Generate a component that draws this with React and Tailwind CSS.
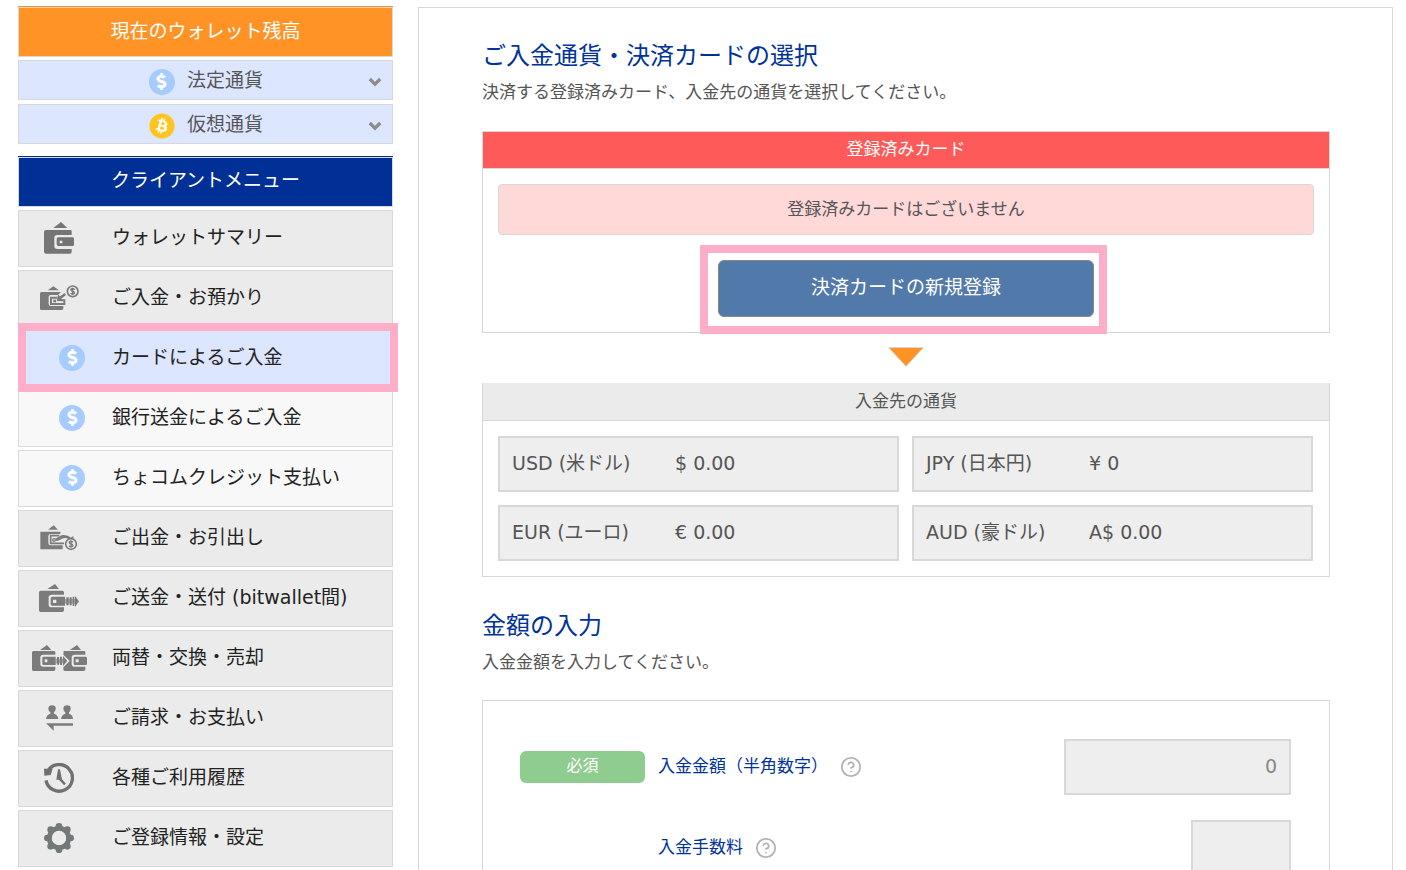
import React from "react";
import { FaBitcoin, FaDollarSign } from "react-icons/fa";
import { CircleHelp } from "lucide-react";

function WalletIcon() {
  return (
    <svg width="30" height="32" viewBox="132 66 90 96" fill="#757575" aria-hidden="true">
      <path d="M160 84 L183 66 L202 84 Z" />
      <path d="M138 90 H212 Q215 90 215 94 V105 H172 Q163 105 163 113 V139 Q163 147 172 147 H215 V156 Q215 161 210 161 H138 Q132 161 132 155 V96 Q132 90 138 90 Z" />
      <path fillRule="evenodd" d="M175 112 H218 Q222 112 222 116 V134 Q222 138 218 138 H175 Q170 138 170 133 V117 Q170 112 175 112 Z M179 122 V130 H187 V122 Z" />
    </svg>
  );
}

function DepositIcon() {
  return (
    <svg width="39" height="26" viewBox="120 257 117 78" fill="#7b7b7b" aria-hidden="true">
      <path d="M143 273 L160 261 L177 273 Z" />
      <path d="M124 278 H183 L174 287 H152 Q146 287 146 293 V314 Q146 320 152 320 H190 V327 Q190 332 185 332 H124 Q120 332 120 328 V283 Q120 278 124 278 Z" />
      <path d="M172 295 H153 V314 H193 V303 H181" fill="none" stroke="#7b7b7b" strokeWidth="6" />
      <path d="M160 301 H168 V309 H160 Z" />
      <path d="M170 306 L174 286 L180 291 L194 281 L198 287 L184 298 L190 304 Z" />
      <circle cx="218" cy="276" r="16" fill="none" stroke="#7b7b7b" strokeWidth="5" />
      <path d="M224 271 Q218 265 213 270 Q212 275 218 276 Q225 278 223 282 Q218 287 212 281 M218 265 V287" fill="none" stroke="#7b7b7b" strokeWidth="4" />
    </svg>
  );
}

function WithdrawIcon() {
  return (
    <svg width="38" height="26" viewBox="122 437 114 78" fill="#7b7b7b" aria-hidden="true">
      <path d="M146 451 L163 438 L176 451 Z" />
      <path d="M123 457 H183 V464 H154 Q147 464 147 471 V491 Q147 498 154 498 H190 V510 H123 Z" />
      <path d="M180 469 H154 V492 H194" fill="none" stroke="#7b7b7b" strokeWidth="5" />
      <circle cx="164" cy="482" r="4" fill="none" stroke="#7b7b7b" strokeWidth="4" />
      <path d="M168 478 L188 467 Q206 466 214 475 L222 470 V488 L202 485 L208 480 Q200 474 192 477 L172 486 Z" />
      <circle cx="215" cy="494" r="16" fill="#ebebeb" stroke="#7b7b7b" strokeWidth="5" />
      <path d="M221 489 Q215 483 210 488 Q209 493 215 494 Q222 496 220 500 Q215 505 209 499 M215 483 V505" fill="none" stroke="#7b7b7b" strokeWidth="4" />
    </svg>
  );
}

function TransferIcon() {
  return (
    <svg width="40" height="28" viewBox="117 72 120 84" fill="#7b7b7b" aria-hidden="true">
      <path d="M142 87 L165 72 L177 87 Z" />
      <path d="M122 92 H187 Q192 92 192 97 V104 H156 Q146 104 146 112 V134 Q146 142 156 142 H192 V151 Q192 156 187 156 H122 Q117 156 117 151 V97 Q117 92 122 92 Z" />
      <path fillRule="evenodd" d="M157 110 H195 V137 H157 Q152 137 152 132 V115 Q152 110 157 110 Z M159 119 V129 H169 V119 Z" />
      <path d="M199 112 H206 V136 H199 Z M209 112 H215 V136 H209 Z M218 110 H223 V138 H218 Z M225 108 L237 124 L225 141 Z" />
      <path opacity="0.6" d="M195 117 H226 V131 H195 Z" />
    </svg>
  );
}

function ExchangeIcon() {
  return (
    <svg width="55" height="26" viewBox="96 255 165 78" fill="#7b7b7b" aria-hidden="true">
      <path d="M120 270 L141 255 L154 270 Z M209 270 L231 255 L243 270 Z" />
      <path d="M100 273 H162 Q166 273 166 277 V284 H130 Q121 284 121 292 V312 Q121 320 130 320 H166 V328 Q166 333 161 333 H100 Q96 333 96 328 V278 Q96 273 100 273 Z" />
      <path fillRule="evenodd" d="M131 290 H167 V315 H131 Q127 315 127 311 V294 Q127 290 131 290 Z M134 298 V307 H142 V298 Z" />
      <path d="M171 291 H177 V314 H171 Z M180 290 H186 V315 H180 Z M189 288 L202 303 L189 318 Z" />
      <path opacity="0.6" d="M167 296 H192 V310 H167 Z" />
      <path d="M191 273 H252 Q256 273 256 277 V284 H224 Q215 284 215 292 V312 Q215 320 224 320 H256 V328 Q256 333 251 333 H194 Q190 333 190 328 V322 L209 303 L190 284 Z" />
      <path fillRule="evenodd" d="M225 290 H257 Q261 290 261 294 V311 Q261 315 257 315 H225 Q221 315 221 311 V294 Q221 290 225 290 Z M227 298 V307 H236 V298 Z" />
    </svg>
  );
}

function PeopleIcon() {
  return (
    <svg width="27" height="26" viewBox="138 16 81 78" fill="#7b7b7b" aria-hidden="true">
      <path d="M156 17 C171 17 169 33 162 38 V42 Q174 46 175 58 H138 Q139 46 151 42 V38 C143 33 142 17 156 17 Z" />
      <path d="M201 17 C216 17 214 33 207 38 V42 Q219 46 219 58 H183 Q184 46 196 42 V38 C188 33 187 17 201 17 Z" />
      <path d="M138 71 H219 V78 H161 V93 Z" />
    </svg>
  );
}

function HistoryIcon() {
  return (
    <svg width="30" height="30" viewBox="132 188 90 90" fill="none" stroke="#707070" aria-hidden="true">
      <path d="M143 212 A40 40 0 1 1 138 240" strokeWidth="10" />
      <path d="M132 205 L158 205 L152 224 L133 226 Z" fill="#707070" stroke="none" />
      <path d="M178 234 L195 252" strokeWidth="7" />
      <path d="M174 207 L169 238 L186 238 L180 207 Z" fill="#707070" stroke="none" />
    </svg>
  );
}

function GearIcon() {
  return (
    <svg width="30" height="30" viewBox="-45 -45 90 90" fill="#737878" aria-hidden="true">
      <circle r="29" fill="none" stroke="#737878" strokeWidth="15" />
      <circle cx="0" cy="-35" r="10" />
      <circle cx="25" cy="-25" r="10" />
      <circle cx="35" cy="0" r="10" />
      <circle cx="25" cy="25" r="10" />
      <circle cx="0" cy="35" r="10" />
      <circle cx="-25" cy="25" r="10" />
      <circle cx="-35" cy="0" r="10" />
      <circle cx="-25" cy="-25" r="10" />
      <circle r="21" fill="#ebebeb" />
    </svg>
  );
}

function DollarCoin() {
  return (
    <span className="flex size-[26px] shrink-0 items-center justify-center rounded-full bg-[#a5cbff] text-white">
      <FaDollarSign size={17} stroke="currentColor" strokeWidth={16} aria-hidden="true" />
    </span>
  );
}

function BitcoinCoin() {
  return (
    <span className="flex size-[26px] shrink-0 items-center justify-center rounded-full bg-[radial-gradient(circle,white_60%,transparent_61%)] text-[#ffc51f]">
      <FaBitcoin size={26} aria-hidden="true" />
    </span>
  );
}

const menu = [
  { label: "ウォレットサマリー", Icon: WalletIcon },
  { label: "ご入金・お預かり", Icon: DepositIcon },
  { label: "カードによるご入金", sub: true, active: true },
  { label: "銀行送金によるご入金", sub: true },
  { label: "ちょコムクレジット支払い", sub: true },
  { label: "ご出金・お引出し", Icon: WithdrawIcon },
  { label: "ご送金・送付 (bitwallet間)", Icon: TransferIcon },
  { label: "両替・交換・売却", Icon: ExchangeIcon },
  { label: "ご請求・お支払い", Icon: PeopleIcon },
  { label: "各種ご利用履歴", Icon: HistoryIcon },
  { label: "ご登録情報・設定", Icon: GearIcon },
];

const currencies = [
  ["USD (米ドル)", "$ 0.00"],
  ["JPY (日本円)", "¥ 0"],
  ["EUR (ユーロ)", "€ 0.00"],
  ["AUD (豪ドル)", "A$ 0.00"],
];

function MenuItem({ label, Icon, sub, active }) {
  const tone = active ? "bg-[#dce6ff]" : sub ? "bg-[#f8f8f8]" : "bg-[#ebebeb]";
  return (
    <li className="relative">
      <a
        href="#"
        aria-current={active ? "page" : undefined}
        className={`flex h-[57px] items-center gap-[13px] border border-[#d8d8d8] text-[19px] leading-6 text-[#222] ${tone}`}
      >
        <span className={`flex w-20 shrink-0 justify-center pb-0.5 ${sub ? "pl-[26px]" : ""}`}>
          {sub ? <DollarCoin /> : <Icon />}
        </span>
        <span className="pb-1">{label}</span>
      </a>
      {active && (
        <span className="pointer-events-none absolute -top-[7px] -right-[5px] -bottom-[5px] left-0 z-10 border-8 border-[#ffaec9]" />
      )}
    </li>
  );
}

function WalletToggle({ label, children }) {
  return (
    <button
      type="button"
      className="relative flex h-10 w-full items-center justify-center gap-3 border border-[#d8d8d8] bg-[#dce6ff] pl-px text-[19px] leading-6 text-[#555]"
    >
      <span className="pt-[3px]">{children}</span>
      <span>{label}</span>
      <svg width="14" height="10" viewBox="0 0 14 10" aria-hidden="true" className="absolute top-4 right-[10px]">
        <path d="M1.8 2 L7 7.2 L12.2 2" fill="none" stroke="#8c8c8c" strokeWidth="3.2" />
      </svg>
    </button>
  );
}

function SectionTitle({ title, text }) {
  return (
    <>
      <h2 className="text-2xl leading-8 text-[#003399]">{title}</h2>
      <p className="mt-2 text-[17px] leading-6 text-[#555]">{text}</p>
    </>
  );
}

function AmountRow({ id, label, required, inputClass, value }) {
  return (
    <div className="flex items-center">
      <div className="w-[125px] shrink-0">
        {required && (
          <span className="block rounded-md bg-[#8fcc8f] pb-0.5 text-center text-base leading-[30px] text-white">必須</span>
        )}
      </div>
      <label htmlFor={id} className="ml-[13px] pb-0.5 text-[17px] leading-6 text-[#003399]">
        {label}
      </label>
      <button type="button" aria-label="ヘルプ" className="ml-3 text-[#b4b4b4]">
        <CircleHelp size={22} strokeWidth={2} />
      </button>
      <input
        id={id}
        readOnly
        defaultValue={value}
        className={`ml-auto h-14 border-2 border-[#d8d8d8] bg-[#eee] px-3 pb-0.5 text-right text-[19px] text-[#888] ${inputClass}`}
      />
    </div>
  );
}

export default function App() {
  return (
    <div className="flex items-start gap-[25px] bg-white pt-[6px] pr-[13px] pl-[18px] font-['DejaVu_Sans','Noto_Sans_CJK_JP',sans-serif]">
      <aside className="w-[375px] shrink-0">
        <section>
          <div className="border-t border-[#ff9326]">
            <h2 className="flex h-[50px] items-center justify-center border border-[#d8d8d8] bg-[#ff9326] pb-0.5 text-[19px] leading-6 text-white">
              現在のウォレット残高
            </h2>
          </div>
          <div className="mt-[3px] flex flex-col gap-1">
            <WalletToggle label="法定通貨">
              <DollarCoin />
            </WalletToggle>
            <WalletToggle label="仮想通貨">
              <BitcoinCoin />
            </WalletToggle>
          </div>
        </section>
        <nav className="mt-3">
          <div className="border-t border-[#003399]">
            <h2 className="flex h-[50px] items-center justify-center border border-[#d8d8d8] bg-[#003096] pb-1 text-[19px] leading-6 text-white">
              クライアントメニュー
            </h2>
          </div>
          <ul className="mt-[3px] flex flex-col gap-[3px]">
            {menu.map((item) => (
              <MenuItem key={item.label} {...item} />
            ))}
          </ul>
        </nav>
      </aside>

      <main className="mt-px min-w-0 flex-1 border border-[#d8d8d8] pt-8 pr-[62px] pb-16 pl-[63px]">
        <SectionTitle title="ご入金通貨・決済カードの選択" text="決済する登録済みカード、入金先の通貨を選択してください。" />

        <section className="mt-[27px] border border-[#d8d8d8]">
          <h3 className="border-b border-[#d8d8d8] bg-[#ff5a5a] pt-[5px] pb-[7px] text-center text-[17px] leading-6 text-white">
            登録済みカード
          </h3>
          <div className="p-[15px]">
            <p className="rounded border border-[#d8d8d8] bg-[#ffd8d8] pt-3 pb-[13px] text-center text-[17px] leading-6 text-[#555]">
              登録済みカードはございません
            </p>
            <div className="relative mx-auto mt-[25px] w-[376px]">
              <button
                type="button"
                className="flex h-[57px] w-full items-center justify-center rounded-md border border-[#888] bg-[#5179aa] pb-1 text-[19px] leading-6 text-white"
              >
                決済カードの新規登録
              </button>
              <span className="pointer-events-none absolute -top-[15px] -right-[13px] -bottom-[17px] -left-[18px] border-8 border-[#ffaec9]" />
            </div>
          </div>
        </section>

        <div className="flex justify-center pt-[14px] pb-4">
          <svg width="36" height="20" viewBox="0 0 36 20" aria-hidden="true">
            <path d="M0.5 0.5 H35.5 L18 19.5 Z" fill="#ff9326" stroke="#d8d8d8" />
          </svg>
        </div>

        <section className="border border-t-0 border-[#d8d8d8]">
          <h3 className="border-b border-[#d8d8d8] bg-[#ebebeb] pt-[6px] pb-[7px] text-center text-[17px] leading-6 text-[#555]">
            入金先の通貨
          </h3>
          <dl className="grid grid-cols-2 gap-[13px] py-[15px] pr-4 pl-[15px]">
            {currencies.map(([name, amount]) => (
              <div
                key={name}
                className="flex h-14 items-center border-2 border-[#d8d8d8] bg-[#eee] px-3 pb-[3px] text-[19px] leading-6 text-[#555]"
              >
                <dt className="w-[163px] shrink-0">{name}</dt>
                <dd>{amount}</dd>
              </div>
            ))}
          </dl>
        </section>

        <div className="mt-[33px]">
          <SectionTitle title="金額の入力" text="入金金額を入力してください。" />
        </div>

        <form className="mt-[26px] flex flex-col gap-[25px] border border-[#d8d8d8] py-[38px] pr-[38px] pl-[37px]">
          <AmountRow id="amount" label="入金金額（半角数字）" required value="0" inputClass="w-[227px]" />
          <AmountRow id="fee" label="入金手数料" inputClass="w-[100px]" />
        </form>
      </main>
    </div>
  );
}
